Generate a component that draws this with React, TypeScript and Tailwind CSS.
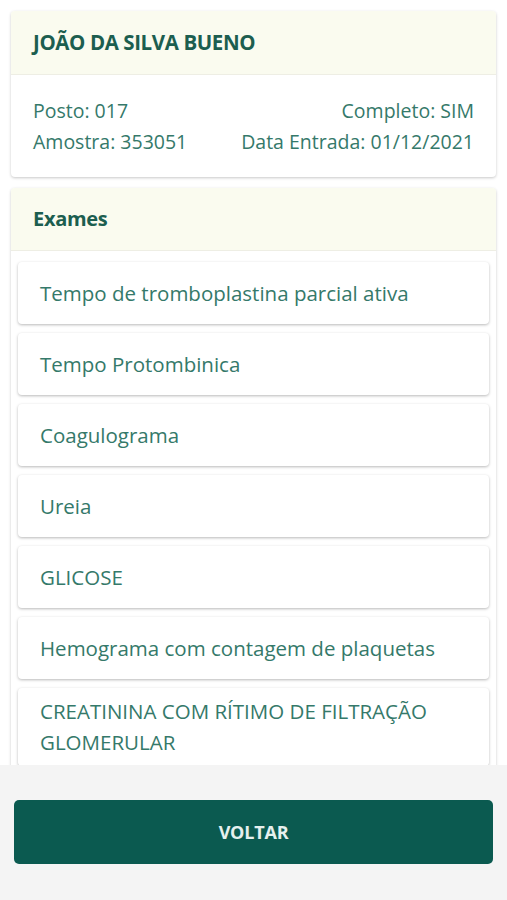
import React from 'react';

const exames = [
    'Tempo de tromboplastina parcial ativa',
    'Tempo Protombinica',
    'Coagulograma',
    'Ureia',
    'GLICOSE',
    'Hemograma com contagem de plaquetas',
    'CREATININA COM RÍTIMO DE FILTRAÇÃO GLOMERULAR',
];

export default function App() {
    return (
        <div className="h-[900px] flex flex-col bg-white text-[#35796a]" style={{ fontFamily: '"Open Sans", "Noto Sans", sans-serif' }}>
            {/* Conteúdo rolável */}
            <div className="h-[765px] overflow-hidden px-[11px] pt-[11px]">
                {/* Dados do paciente */}
                <div className="rounded-[4px] bg-white shadow-[0_1px_3px_rgba(0,0,0,0.22)] overflow-hidden">
                    <div className="h-[64px] flex items-center px-[22px] bg-[#fafbef] border-b border-[#eeeee4]">
                        <h1 className="text-[20.5px] font-bold text-[#1c5e4f] tracking-[-0.4px]">JOÃO DA SILVA BUENO</h1>
                    </div>
                    <div className="px-[22px] pt-[20px] pb-[20px] text-[19.5px] leading-[31px]">
                        <div className="flex justify-between">
                            <span>Posto: 017</span>
                            <span>Completo: SIM</span>
                        </div>
                        <div className="flex justify-between">
                            <span>Amostra: 353051</span>
                            <span>Data Entrada: 01/12/2021</span>
                        </div>
                    </div>
                </div>

                {/* Exames */}
                <div className="mt-[11px] rounded-t-[4px] bg-white shadow-[0_1px_3px_rgba(0,0,0,0.22)]">
                    <div className="h-[63px] flex items-center px-[22px] bg-[#fafbef] border-b border-[#eeeee4] rounded-t-[4px]">
                        <h2 className="text-[20px] font-bold text-[#1c5e4f] tracking-[-0.3px]">Exames</h2>
                    </div>
                    <div className="flex flex-col gap-[9px] px-[7px] pt-[11px] pb-4">
                        {exames.map(exame => (
                            <div
                                key={exame}
                                className="min-h-[62px] flex items-center px-[22px] py-[8px] rounded-[4px] bg-white shadow-[0_1px_3px_rgba(0,0,0,0.28)] text-[20.5px] leading-[31px]"
                            >
                                {exame}
                            </div>
                        ))}
                    </div>
                </div>
            </div>

            {/* Rodapé */}
            <div className="flex-1 bg-[#f4f4f4] px-[14px] pt-[35px]">
                <button className="w-full h-[64px] rounded-[5px] bg-[#0b5a50] text-[#e6f0ee] text-[18px] font-bold tracking-[-0.2px]">
                    VOLTAR
                </button>
            </div>
        </div>
    );
}
